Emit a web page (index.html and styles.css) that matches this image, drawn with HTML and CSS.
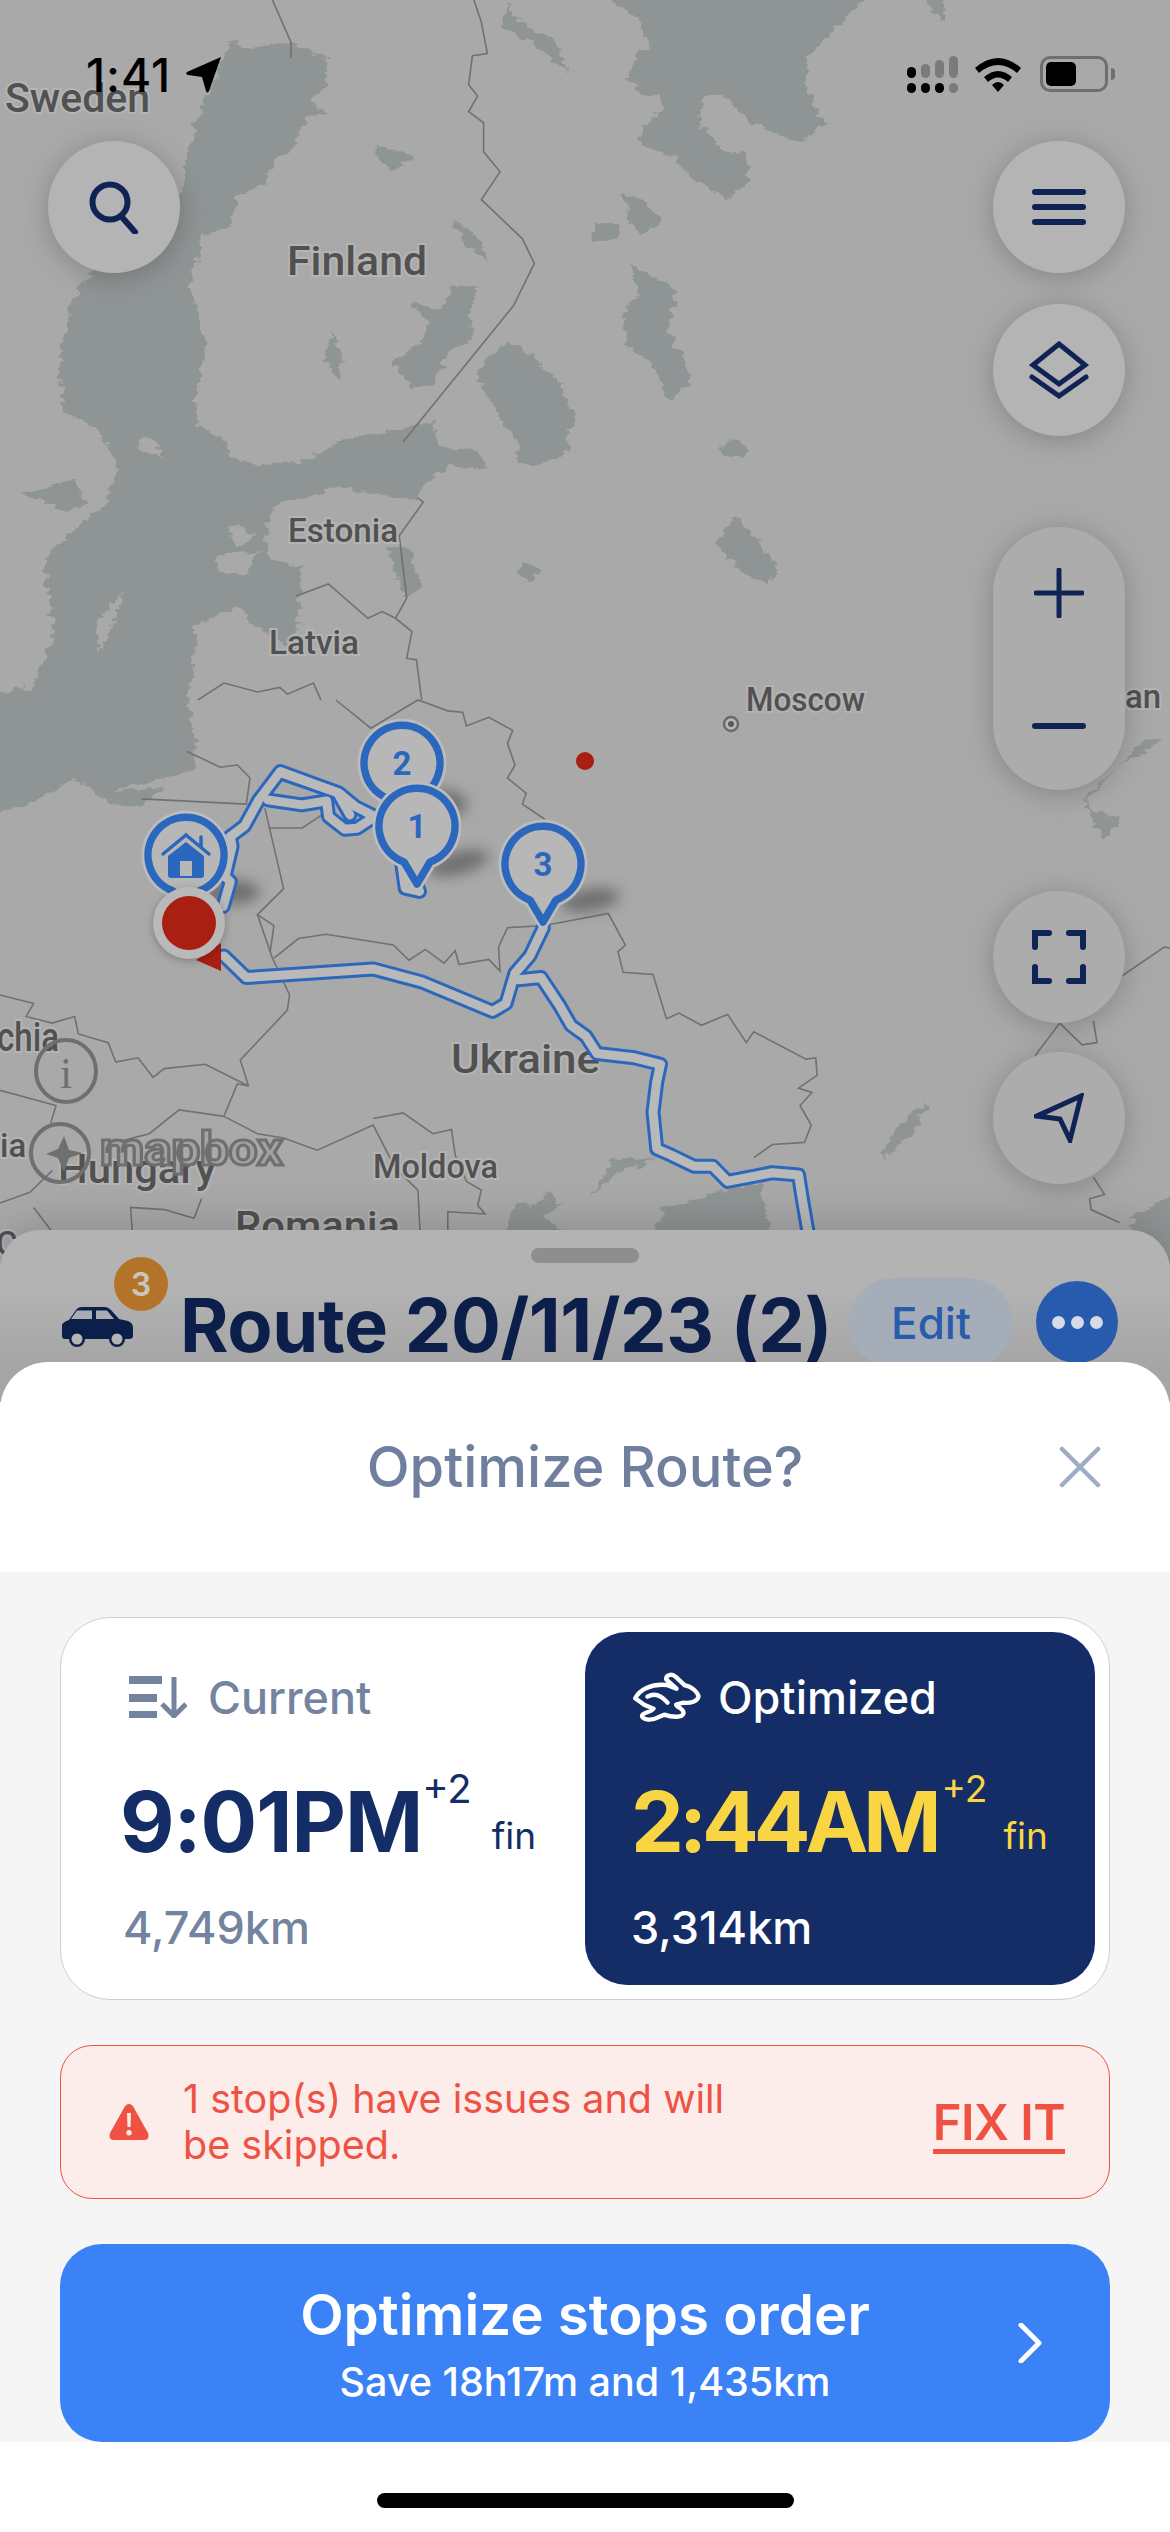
FILE: index.html
```html
<!DOCTYPE html>
<html lang="en">
<head>
<meta charset="utf-8">
<title>Optimize Route</title>
<link rel="stylesheet" href="styles.css">
</head>
<body>
<div class="screen">
  <svg class="map" width="1170" height="1300" viewBox="0 0 1170 1300" xmlns="http://www.w3.org/2000/svg">
    <defs>
      <filter id="soft" x="-50%" y="-100%" width="200%" height="300%"><feGaussianBlur stdDeviation="7"/></filter>
      <filter id="rough" x="-15%" y="-15%" width="130%" height="130%">
        <feTurbulence type="fractalNoise" baseFrequency="0.06" numOctaves="3" seed="4" result="n"/>
        <feDisplacementMap in="SourceGraphic" in2="n" scale="20" xChannelSelector="R" yChannelSelector="G"/>
      </filter>
      <path id="pin" d="M-13,36 L0,58 L13,36 A38,38 0 1 0 -13,36 Z"/>
    </defs>
    <rect class="land" width="1170" height="1300"/>
    <g transform="scale(.7463,.4464)">
      <g class="coast">
      <polygon class="water" points="310,90 330,105 390,95 435,130 440,190 415,225 440,255 410,260 395,320 365,370 355,410 320,440 305,510 270,530 265,590 255,630 265,690 275,790 260,910 265,950 300,985 305,1020 340,1040 400,1035 470,980 540,960 580,945 590,1000 640,1010 655,1050 600,1045 570,1080 555,1120 515,1110 450,1090 420,1110 370,1130 355,1190 360,1250 405,1270 397,1410 400,1460 340,1400 320,1360 265,1400 250,1568 0,1568 30,1540 70,1400 60,1250 140,1130 160,1050 130,960 85,920 80,800 95,680 125,600 240,440 260,280"/>
      <polygon class="water" points="805,-20 850,40 870,100 855,120 840,170 860,215 885,210 890,240 860,290 860,320 890,350 905,350 925,400 975,445 1005,405 1000,340 970,345 935,270 940,215 965,210 1005,270 1020,285 1075,320 1105,275 1080,195 1080,130 1120,60 1170,-20"/>
      <polygon class="water" points="1235,-20 1265,-20 1265,50 1250,25"/>
      <polygon class="water" points="680,10 705,60 740,85 765,165 715,100 680,70 672,45"/>
      <polygon class="water" points="680,765 710,790 755,870 775,955 760,960 765,1010 715,1045 690,1040 695,990 675,950 640,845 655,800"/>
      <polygon class="water" points="845,590 885,630 905,650 895,740 925,830 915,880 895,900 880,830 840,770 835,700 855,660"/>
      <polygon class="water" points="965,1000 985,985 1000,1000 998,1025 970,1025"/>
      <polygon class="water" points="690,1290 705,1255 720,1280 715,1303"/>
      <polygon class="water" points="960,1215 985,1160 1010,1200 1040,1265 1030,1308 1000,1290 975,1250"/>
      <polygon class="water" points="795,500 825,500 830,540 795,540"/>
      <polygon class="water" points="835,430 860,450 890,495 860,530 845,500"/>
      <polygon class="water" points="505,320 530,340 555,350 525,385 505,350"/>
      <polygon class="water" points="605,485 640,530 655,585 625,550"/>
      <polygon class="water" points="550,680 590,690 610,640 640,640 630,700 635,760 600,790 580,860 550,870 525,810 570,760 575,720"/>
      <polygon class="water" points="445,740 458,800 455,855 435,810"/>
      <polygon class="water" points="30,1105 60,1095 100,1070 115,1130 90,1145"/>
      <polygon class="water" points="520,1225 548,1220 565,1320 540,1340"/>
      <polygon class="land" points="320,1175 340,1200 320,1225 305,1190"/>
      <polygon class="land" points="295,1240 350,1235 330,1290 290,1280"/>
      <polygon class="land" points="190,975 215,990 215,1030 185,1000"/>
      <polygon class="land" points="165,1325 125,1400 135,1460 160,1360"/>
      <polygon class="land" points="55,1410 75,1410 45,1540 28,1560"/>
      </g>
      <g class="border">
        <polyline points="365,0 390,95 390,130"/>
        <polyline points="635,0 645,50 653,120 633,125 628,190 640,215 628,250 648,275 648,340 670,385 645,447 700,535 716,590 688,685 540,990"/>
        <polyline points="560,1115 567,1125 535,1200 545,1340 530,1385"/>
        <polyline points="397,1335 440,1308 493,1385 512,1370 530,1385 552,1415 545,1475 558,1478 565,1568"/>
        <polyline points="265,1568 300,1530 345,1550 375,1540 385,1555 420,1530 430,1568"/>
      </g>
    </g>
    <g transform="translate(0,700) scale(.7463,.4337)">
      <g class="coast">
      <polygon class="water" points="-20,-20 250,-20 262,100 262,160 150,210 220,200 190,245 150,240 100,180 40,240 -20,265"/>
      <polygon class="water" points="660,1300 690,1160 720,1165 735,1135 750,1165 730,1190 800,1300"/>
      <polygon class="water" points="860,1300 890,1170 940,1150 975,1125 1020,1115 1040,1300"/>
      <polygon class="water" points="820,1060 880,1055 830,1090 795,1140"/>
      <polygon class="water" points="1500,1300 1520,1190 1580,1130 1580,1300"/>
      <polygon class="water" points="1530,95 1560,90 1500,150 1455,220 1460,260 1505,270 1480,320 1450,240"/>
      <polygon class="water" points="1240,930 1225,1000 1180,1060 1190,1010 1220,960"/>
      </g>
      <g class="border">
        <polyline points="450,0 497,65 560,0 600,25 620,28 625,60 655,40 687,70 680,100 690,150 680,180 705,215 700,240 730,275"/>
        <polyline points="190,228 330,240 335,180 318,150 295,155 250,118"/>
        <polyline points="355,250 380,435 345,495 367,520 362,580"/>
        <polyline points="360,295 405,295 440,255"/>
        <polyline points="367,595 400,550 437,540 527,565 548,600 570,575 595,607 610,578 615,610 655,598 670,625 668,570 680,525 730,520 815,492 838,565 828,580 835,628 875,633 893,735 910,722 940,750 975,725 1000,790 1010,765 1080,828 1093,825 1095,865 1070,895 1088,905 1072,935 1087,980 1078,1020 1035,1025 1010,1055"/>
        <polyline points="345,495 365,595 388,680 385,715 322,830 333,890"/>
        <polyline points="0,680 45,700 35,730 70,745 100,730 105,770 145,790 155,835 185,825 205,870 220,850 275,840 333,890 318,885 300,960 240,945 200,1000 155,1020"/>
        <polyline points="0,900 75,935 68,975"/>
        <polyline points="500,965 540,952 580,1000 605,990 610,1050 625,1110 645,1130 640,1165 650,1185 600,1180 600,1300"/>
        <polyline points="300,960 345,1000 380,1010 425,1038 500,980 530,1080 560,1130 565,1300"/>
        <polyline points="270,1150 260,1195 220,1175 175,1170 180,1300"/>
        <polyline points="0,1160 40,1135 70,1085"/>
        <polyline points="45,1170 85,1260"/>
        <polyline points="1387,820 1420,745 1450,795 1470,790 1465,740"/>
        <polyline points="1500,640 1560,570 1568,572"/>
        <polyline points="1465,1100 1480,1140 1460,1150 1462,1175 1500,1205"/>
      </g>
    </g>
    <g class="labels">
      <text x="5" y="112" textLength="145" lengthAdjust="spacingAndGlyphs" class="lg">Sweden</text>
      <text x="287" y="275" textLength="140" lengthAdjust="spacingAndGlyphs" class="lg">Finland</text>
      <text x="288" y="542" textLength="110" lengthAdjust="spacingAndGlyphs" class="md">Estonia</text>
      <text x="269" y="654" textLength="90" lengthAdjust="spacingAndGlyphs" class="md">Latvia</text>
      <text x="746" y="711" textLength="119" lengthAdjust="spacingAndGlyphs" class="md">Moscow</text>
      <text x="1125" y="708" class="md">an</text>
      <text x="451" y="1073" textLength="149" lengthAdjust="spacingAndGlyphs" class="lg">Ukraine</text>
      <text x="373" y="1178" textLength="125" lengthAdjust="spacingAndGlyphs" class="md">Moldova</text>
      <text x="235" y="1240" textLength="165" lengthAdjust="spacingAndGlyphs" class="lg">Romania</text>
      <text x="58" y="1183" textLength="158" lengthAdjust="spacingAndGlyphs" class="lg">Hungary</text>
      <text x="-3" y="1051" class="lg" textLength="62" lengthAdjust="spacingAndGlyphs">chia</text>
      <text x="0" y="1157" class="md">ia</text>
      <text x="-4" y="1255" class="md">Cr</text>
    </g>
    <circle class="city" cx="731" cy="724" r="7"/>
    <circle class="city-dot" cx="731" cy="724" r="3"/>
    <ellipse class="shade" cx="443" cy="804" rx="24" ry="14" filter="url(#soft)"/>
    <ellipse class="shade" cx="458" cy="863" rx="32" ry="11" filter="url(#soft)" transform="rotate(-14 458 863)"/>
    <ellipse class="shade" cx="590" cy="900" rx="30" ry="11" filter="url(#soft)" transform="rotate(-10 590 900)"/>
    <ellipse class="shade" cx="232" cy="892" rx="28" ry="12" filter="url(#soft)"/>
    <g class="route">
      <g transform="translate(100,700) scale(.357,.333)">
        <polyline points="365,410 405,378 445,300 505,215 670,280 715,320 770,350"/>
        <polyline points="470,300 565,315 635,303 640,350 685,388 720,385 770,350"/>
        <polyline points="505,218 665,278 700,345"/>
        <polyline points="365,410 370,440 350,530 365,545 345,620"/>
        <polyline points="845,490 855,565 895,575 880,535"/>
      </g>
      <g transform="translate(0,700) scale(.7463,.4337)">
        <polyline points="300,590 330,640 500,620 565,650 660,718 678,700 690,630 710,590 728,525"/>
        <polyline points="695,645 725,640 750,705 765,750 785,775 800,815 850,825 885,840 880,880 875,950 880,1035 900,1050 930,1075 955,1075 975,1110 1035,1090 1070,1095 1075,1150 1090,1300"/>
      </g>
    </g>
    <g class="route-in">
      <g transform="translate(100,700) scale(.357,.333)">
        <polyline points="365,410 405,378 445,300 505,215 670,280 715,320 770,350"/>
        <polyline points="470,300 565,315 635,303 640,350 685,388 720,385 770,350"/>
        <polyline points="505,218 665,278 700,345"/>
        <polyline points="365,410 370,440 350,530 365,545 345,620"/>
        <polyline points="845,490 855,565 895,575 880,535"/>
      </g>
      <g transform="translate(0,700) scale(.7463,.4337)">
        <polyline points="300,590 330,640 500,620 565,650 660,718 678,700 690,630 710,590 728,525"/>
        <polyline points="695,645 725,640 750,705 765,750 785,775 800,815 850,825 885,840 880,880 875,950 880,1035 900,1050 930,1075 955,1075 975,1110 1035,1090 1070,1095 1075,1150 1090,1300"/>
      </g>
    </g>
    <circle class="dot" cx="585" cy="761" r="9"/>
    <g transform="translate(402,763)"><use href="#pin" class="pin-halo"/><use href="#pin" class="pin-line"/><text class="pin-num" y="12">2</text></g>
    <g transform="translate(417,826)"><use href="#pin" class="pin-halo"/><use href="#pin" class="pin-line"/><text class="pin-num" y="12">1</text></g>
    <g transform="translate(543,864)"><use href="#pin" class="pin-halo"/><use href="#pin" class="pin-line"/><text class="pin-num" y="12">3</text></g>
    <g transform="translate(186,855)">
      <use href="#pin" class="pin-halo"/><use href="#pin" class="pin-line"/>
      <path class="home-roof" d="M-23,-1 L0,-20 L23,-1 M15,-8 V-18"/>
      <path class="home-body" d="M-18,1 L0,-13 L18,1 V20 Q18,23 15,23 H-15 Q-18,23 -18,20 Z M-6,6 V21 H6 V6 Z" fill-rule="evenodd"/>
    </g>
    <polygon class="dot" points="221,943 221,971 196,960"/>
    <circle class="me-ring" cx="189" cy="923" r="36"/>
    <circle class="dot" cx="189" cy="923" r="27"/>
    <g class="logo">
      <ellipse cx="66" cy="1071" rx="30" ry="31"/>
      <text class="logo-i" x="66" y="1088">i</text>
      <circle cx="60" cy="1153" r="29"/>
      <path class="logo-star" d="M64,1136 L69,1150 L83,1153 L69,1158 L64,1172 L58,1158 L46,1154 L58,1149 Z"/>
      <text class="logo-text" x="100" y="1165" textLength="183" lengthAdjust="spacingAndGlyphs">mapbox</text>
    </g>
  </svg>

  <div class="status">
    <div class="status-left">
      <span class="time">1:41</span>
      <svg class="loc" width="36" height="36" viewBox="0 0 36 36"><path d="M35,0 L1,15 Q-1,17 2,18 L16,20 L20,34 Q21,37 23,34 Z" fill="#000"/></svg>
    </div>
    <div class="status-right">
      <svg width="52" height="38" viewBox="0 0 52 38">
        <rect class="sig-off" x="14" y="8" width="9" height="14" rx="4.5"/><rect class="sig-off" x="28" y="4" width="9" height="18" rx="4.5"/><rect class="sig-off" x="42" y="0" width="9" height="22" rx="4.5"/>
        <rect x="0" y="11" width="9" height="11" rx="4.5"/><rect x="0" y="27" width="9" height="10" rx="4.5"/><rect x="14" y="27" width="9" height="10" rx="4.5"/><rect x="28" y="27" width="9" height="10" rx="4.5"/><rect class="sig-off" x="42" y="27" width="9" height="10" rx="4.5"/>
      </svg>
      <svg class="wifi" width="48" height="36" viewBox="0 0 48 36"><path d="M1,12 Q24,-8 47,12 L43,17 Q24,1 5,17 Z M10,21 Q24,9 38,21 L34,26 Q24,17 14,26 Z M18,29 Q24,23 30,29 L24,36 Z"/></svg>
      <div class="battery"><div class="battery-level"></div></div>
      <div class="battery-tip"></div>
    </div>
  </div>

  <div class="controls">
    <div class="ctl-left">
      <button class="round">
        <svg width="54" height="54" viewBox="0 0 54 54"><circle cx="23" cy="22" r="17.5"/><path d="M34,36 L48,52"/></svg>
      </button>
    </div>
    <div class="ctl-right">
      <button class="round">
        <svg width="54" height="36" viewBox="0 0 54 36"><path d="M3,3 H51 M3,18 H51 M3,33 H51"/></svg>
      </button>
      <button class="round g1">
        <svg width="60" height="58" viewBox="0 0 60 58"><path class="thin" d="M30,3 L56,24 L30,43 L4,24 Z"/><path class="thin" d="M3,36 L30,55 L57,36"/></svg>
      </button>
      <div class="zoom g2">
        <svg width="50" height="50" viewBox="0 0 50 50"><path class="thin" d="M25,2 V48 M2,25 H48"/></svg>
        <svg width="54" height="8" viewBox="0 0 54 8"><path d="M3,4 H51"/></svg>
      </div>
      <button class="round g3">
        <svg width="54" height="54" viewBox="0 0 54 54"><path d="M3,17 V3 H17 M37,3 H51 V17 M51,37 V51 H37 M17,51 H3 V37"/></svg>
      </button>
      <button class="round g4">
        <svg width="50" height="50" viewBox="0 0 50 50"><path class="thin" d="M47,3 L3,23 L26,26 L36,47 Z"/></svg>
      </button>
    </div>
  </div>

  <section class="sheet">
    <div class="handle"></div>
    <div class="sheet-row">
      <div class="vehicle">
        <svg class="car" width="72" height="40" viewBox="0 0 72 40">
          <path fill="#0c1f4a" d="M1,18 Q2,15 8,13 L15,3 Q17,0 21,0 L44,0 Q47,0 50,3 L58,12 L67,14 Q72,16 72,21 L72,29 Q72,32 68,32 L4,32 Q1,32 1,29 Z"/>
          <path fill="#a9adb3" d="M10,12 L16,3.5 L31,3.5 L31,12 Z M35,3.5 L46,3.5 L53,12 L35,12 Z"/>
          <circle cx="16" cy="32" r="8" fill="#0c1f4a"/><circle cx="16" cy="32" r="5.5" fill="#b5b5b5"/>
          <circle cx="56" cy="32" r="8" fill="#0c1f4a"/><circle cx="56" cy="32" r="5.5" fill="#b5b5b5"/>
        </svg>
        <span class="badge">3</span>
      </div>
      <h2 class="route-name">Route 20/11/23 (2)</h2>
      <span class="edit">Edit</span>
      <span class="more"><i></i><i></i><i></i></span>
    </div>
  </section>

  <section class="modal">
    <header class="modal-head">
      <h1>Optimize Route?</h1>
      <svg class="close" width="42" height="42" viewBox="0 0 42 42"><path d="M3,3 L39,39 M39,3 L3,39"/></svg>
    </header>
    <div class="modal-body">
      <div class="compare">
        <div class="col current">
          <div class="col-head">
            <svg class="sort" width="58" height="42" viewBox="0 0 58 42"><path d="M0,0 H33 V8 H0 Z M0,18 H28 V26 H0 Z M0,35 H28 V42 H0 Z" fill="#7484a0"/><path d="M45,1 V39 M33,28 L45,40 L57,28" fill="none" stroke="#7484a0" stroke-width="5"/></svg>
            <span>Current</span>
          </div>
          <div class="eta"><b>9:01PM</b><sup>+2</sup><small>fin</small></div>
          <div class="dist">4,749km</div>
        </div>
        <div class="col best">
          <div class="col-head">
            <svg class="rabbit" width="68" height="52" viewBox="97 95 203 156"><path d="M103,177 C115,152 150,132 198,137 L227,148 L196,120 C195,106 214,102 224,112 L252,138 C272,140 292,160 293,172 C290,186 270,192 248,190 L226,196 C224,204 250,206 248,222 C244,236 214,234 190,226 L172,234 C150,246 120,240 124,228 C128,218 150,220 158,208 L130,196 Z M140,172 C160,160 180,166 200,190" fill="none" stroke="#fff" stroke-width="13" stroke-linejoin="round" stroke-linecap="round"/></svg>
            <span>Optimized</span>
          </div>
          <div class="eta"><b>2:44AM</b><sup>+2</sup><small>fin</small></div>
          <div class="dist">3,314km</div>
        </div>
      </div>
      <div class="alert">
        <svg class="warn" width="40" height="36" viewBox="0 0 40 36"><path fill-rule="evenodd" d="M20,0 Q23,0 25,4 L39,29 Q41,36 35,36 H5 Q-1,36 1,29 L15,4 Q17,0 20,0 Z M18,9 L18.5,23 H21.5 L22,9 Z M20,26 A2.8,2.8 0 1 0 20.01,26 Z"/></svg>
        <p>1 stop(s) have issues and will be skipped.</p>
        <a class="fix">FIX IT</a>
      </div>
      <button class="cta">
        <span class="cta-title">Optimize stops order</span>
        <span class="cta-sub">Save 18h17m and 1,435km</span>
        <svg class="chev" width="24" height="40" viewBox="0 0 24 40"><path d="M3,2 L21,20 L3,38"/></svg>
      </button>
    </div>
    <footer class="home-area"><div class="home-bar"></div></footer>
  </section>
</div>
</body>
</html>
```
FILE: styles.css
```css
* { box-sizing: border-box; }
html, body { margin: 0; padding: 0; background: #fff; }
body { font-family: Inter, "Liberation Sans", sans-serif; }

.screen {
  position: relative;
  width: 1170px;
  height: 2532px;
  overflow: hidden;
  display: flex;
  flex-direction: column;
}

/* map canvas */
.map { position: absolute; left: 0; top: 0; }
.land { fill: #a9a9a9; }
.water { fill: #8f9494; }
.coast { filter: url(#rough); }
.border polyline { fill: none; stroke: #717171; stroke-width: 1.6; vector-effect: non-scaling-stroke; }
.labels text {
  font-family: Roboto, sans-serif;
  font-weight: 500;
  fill: #515151;
  stroke: #b4b4b4;
  stroke-width: 4px;
  paint-order: stroke;
}
.labels .lg { font-size: 40px; }
.labels .md { font-size: 33px; }
.city { fill: #b8b8b8; stroke: #6a6a6a; stroke-width: 2.5; }
.city-dot { fill: #5a5a5a; }
.shade { fill: #555; opacity: .7; }
.route polyline, .route-in polyline { fill: none; stroke-linejoin: round; stroke-linecap: round; vector-effect: non-scaling-stroke; }
.route polyline { stroke: #2b68bd; stroke-width: 15; }
.route-in polyline { stroke: #b9b9b9; stroke-width: 9; }
.dot { fill: #a91f12; }
.pin-halo { fill: #b7b7b7; stroke: #bcbcbc; stroke-width: 13; stroke-linejoin: round; }
.pin-line { fill: #b7b7b7; stroke: #2b68bd; stroke-width: 7.5; stroke-linejoin: round; }
.pin-num { font-family: Roboto, sans-serif; font-weight: 700; font-size: 33px; fill: #2b68bd; text-anchor: middle; }
.home-roof { fill: none; stroke: #2b68bd; stroke-width: 3.5; stroke-linecap: round; }
.home-body { fill: #2b68bd; }
.me-ring { fill: #b9b9b9; filter: drop-shadow(0 2px 4px rgba(0,0,0,.25)); }
.logo ellipse, .logo circle { fill: none; stroke: #6f6f6f; stroke-width: 4; }
.logo-i { font-family: "Liberation Serif", serif; font-size: 44px; fill: #6f6f6f; text-anchor: middle; }
.logo-star { fill: #6f6f6f; }
.logo-text {
  font-family: Roboto, sans-serif;
  font-weight: 700;
  font-size: 46px;
  fill: #a3a3a3;
  stroke: #6f6f6f;
  stroke-width: 3;
}

/* status bar */
.status {
  position: relative;
  height: 141px;
  flex: none;
  display: flex;
  justify-content: space-between;
  align-items: flex-start;
  padding: 56px 55px 0 86px;
}
.status-left { display: flex; align-items: flex-start; gap: 15px; }
.time { font-family: Inter, sans-serif; font-weight: 500; font-size: 46px; line-height: 38px; letter-spacing: 1px; color: #000; }
.loc { margin-top: 1px; }
.status-right { display: flex; align-items: flex-start; }
.status-right rect { fill: #000; }
.status-right rect.sig-off { fill: #7b7b7b; }
.wifi { margin-left: 15px; fill: #000; }
.battery {
  width: 68px;
  height: 36px;
  margin-left: 18px;
  border: 3px solid #6f6f6f;
  border-radius: 10px;
  padding: 3px;
}
.battery-level { width: 30px; height: 24px; background: #000; border-radius: 5px; }
.battery-tip { width: 4px; height: 12px; margin: 12px 0 0 3px; background: #6f6f6f; border-radius: 0 6px 6px 0; }

/* map controls */
.controls {
  position: relative;
  height: 1089px;
  flex: none;
  display: flex;
  justify-content: space-between;
  padding: 0 45px 0 48px;
}
.ctl-right { display: flex; flex-direction: column; }
.round, .zoom {
  width: 132px;
  border: 0;
  padding: 0;
  background: #b4b4b4;
  box-shadow: 0 4px 28px rgba(0,0,0,.22);
  display: flex;
  align-items: center;
  justify-content: center;
}
.round { height: 132px; border-radius: 50%; }
.round svg path, .round svg circle, .zoom svg path { fill: none; stroke: #0f2355; stroke-width: 6; stroke-linecap: round; }
.round svg path.thin, .zoom svg path.thin { stroke-width: 5; stroke-linejoin: miter; }
.round.g1 { margin-top: 31px; }
.zoom {
  margin-top: 91px;
  height: 263px;
  border-radius: 66px;
  flex-direction: column;
  justify-content: flex-start;
  padding-top: 41px;
  background: #acacac;
  gap: 104px;
}
.round.g3 { margin-top: 101px; background: #acacac; }
.round.g4 { margin-top: 29px; background: #acacac; }

/* route sheet */
.sheet {
  position: relative;
  height: 172px;
  margin-bottom: -40px;
  flex: none;
  border-radius: 40px 40px 0 0;
  background: linear-gradient(#b3b3b3, #b3b3b3 55px, #a6a6a6 132px);
  box-shadow: 0 -8px 40px rgba(0,0,0,.16);
  padding-top: 18px;
}
.handle { width: 108px; height: 15px; margin: 0 auto; border-radius: 8px; background: #8e8e8e; }
.sheet-row { display: flex; align-items: flex-start; padding: 15px 52px 0 61px; }
.vehicle { position: relative; width: 119px; height: 90px; flex: none; }
.car { position: absolute; left: 0; top: 29px; }
.badge {
  position: absolute;
  left: 53px;
  top: -21px;
  width: 54px;
  height: 54px;
  border-radius: 50%;
  background: #b3742a;
  color: #c9c5bf;
  font-size: 32px;
  font-weight: 600;
  display: flex;
  align-items: center;
  justify-content: center;
}
.route-name {
  margin: 3px 0 0;
  width: 669px;
  flex: none;
  white-space: nowrap;
  font-size: 74px;
  line-height: 88px;
  font-weight: 700;
  letter-spacing: -.4px;
  color: #0c1f4a;
}
.edit {
  width: 164px;
  height: 90px;
  flex: none;
  border-radius: 45px;
  background: #a5adb8;
  color: #2a5cad;
  font-size: 44px;
  font-weight: 500;
  display: flex;
  align-items: center;
  justify-content: center;
}
.more {
  width: 82px;
  height: 82px;
  margin: 3px 0 0 23px;
  flex: none;
  border-radius: 50%;
  background: #285bad;
  display: flex;
  align-items: center;
  justify-content: center;
  gap: 6px;
}
.more i { width: 13px; height: 13px; border-radius: 50%; background: #d6dbe6; }

/* modal */
.modal {
  position: relative;
  flex: 1;
  border-radius: 48px 48px 0 0;
  background: #fff;
  display: flex;
  flex-direction: column;
  overflow: hidden;
}
.modal-head {
  position: relative;
  height: 210px;
  flex: none;
  display: flex;
  align-items: center;
  justify-content: center;
}
.modal-head h1 { margin: 0; font-size: 56px; line-height: 66px; font-weight: 500; color: #6f7f9d; }
.close { position: absolute; right: 69px; top: 84px; }
.close path { fill: none; stroke: #9fadc4; stroke-width: 4.5; stroke-linecap: round; }
.modal-body {
  height: 870px;
  flex: none;
  background: #f5f5f5;
  padding: 45px 60px 0;
  display: flex;
  flex-direction: column;
}
.compare {
  height: 383px;
  flex: none;
  display: flex;
  justify-content: space-between;
  padding: 14px;
  background: #fff;
  border: 1px solid #cfcfcf;
  border-radius: 50px;
}
.col { width: 510px; height: 353px; padding: 39px 0 0; border-radius: 42px; flex: none; }
.col-head { display: flex; align-items: center; height: 52px; font-size: 45px; font-weight: 500; }
.current { color: #7484a0; padding-left: 45px; }
.current .col-head { padding-left: 9px; gap: 21px; }
.best { background: #142d66; color: #fff; padding-left: 46px; }
.best .col-head { gap: 17px; padding-left: 2px; }
.eta { display: flex; align-items: flex-start; height: 100px; margin-top: 49px; position: relative; white-space: nowrap; }
.eta b { font-size: 84px; line-height: 100px; font-weight: 700; letter-spacing: -1px; }
.eta sup { font-size: 40px; line-height: 40px; font-weight: 400; margin: -3px 0 0 0; }
.eta small { font-size: 37px; line-height: 40px; font-weight: 400; margin: 44px 0 0 20px; }
.current .eta { color: #142d66; }
.best .eta { color: #f9d544; }
.best .eta b { letter-spacing: -5px; }
.best .eta sup { margin-left: 5px; font-size: 37px; }
.best .eta small { margin-left: 16px; }
.dist { margin-top: 29px; font-size: 45px; line-height: 54px; font-weight: 500; }
.current .dist { color: #7484a0; padding-left: 3px; }
.best .dist { padding-left: 0; }

.alert {
  height: 154px;
  margin-top: 45px;
  flex: none;
  display: flex;
  align-items: center;
  padding: 0 44px 0 48px;
  background: #fcecea;
  border: 1px solid #ef5242;
  border-radius: 32px;
  color: #ef5242;
}
.warn { flex: none; fill: #ef5242; }
.alert p { margin: 0 0 0 34px; width: 560px; flex: none; font-size: 39.5px; line-height: 46px; font-weight: 400; }
.fix { margin: 4px 0 0 auto; font-size: 49px; font-weight: 600; line-height: 56px; border-bottom: 5px solid #ef5242; height: 59px; letter-spacing: -.6px; }

.cta {
  position: relative;
  height: 198px;
  margin-top: 45px;
  flex: none;
  border: 0;
  border-radius: 42px;
  background: #3b82f6;
  color: #fff;
  font-family: inherit;
  display: flex;
  flex-direction: column;
  align-items: center;
  padding: 38px 0 0;
}
.cta-title { font-size: 56.5px; line-height: 66px; font-weight: 600; }
.cta-sub { font-size: 39.5px; line-height: 46px; font-weight: 500; margin-top: 11px; }
.chev { position: absolute; right: 68px; top: 79px; }
.chev path { fill: none; stroke: #fff; stroke-width: 5; stroke-linecap: round; stroke-linejoin: round; }

.home-area { flex: 1; display: flex; justify-content: center; padding-top: 51px; background: #fff; }
.home-bar { width: 417px; height: 15px; border-radius: 8px; background: #000; }
```
